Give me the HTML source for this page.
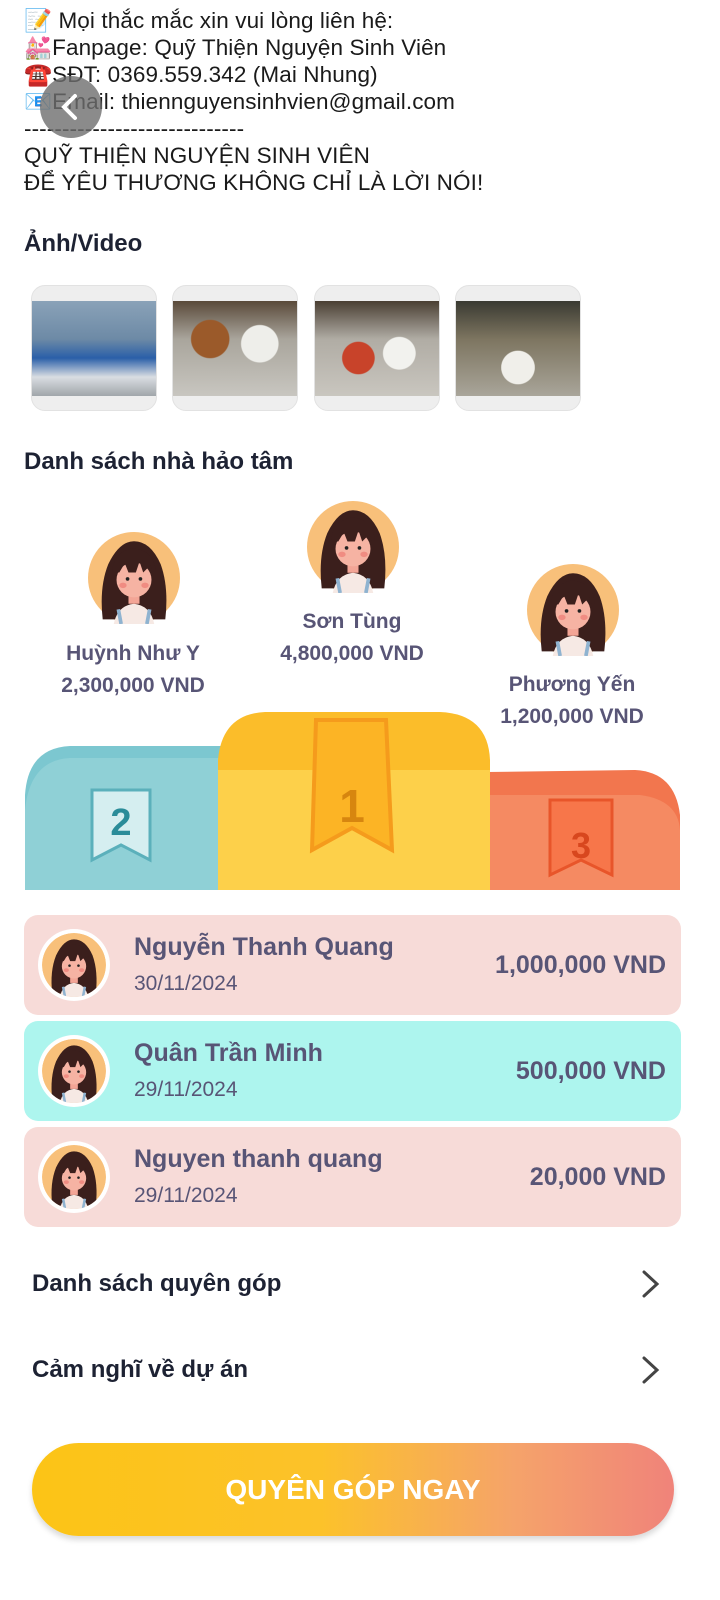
<!DOCTYPE html>
<html><head><meta charset="utf-8"><style>
*{margin:0;padding:0;box-sizing:border-box}
body{width:720px;height:1600px;background:#fff;font-family:"Liberation Sans","Noto Sans CJK SC",sans-serif;position:relative;overflow:hidden;color:#111}
.ab{position:absolute}
.txt{left:24px;top:7px;font-size:22.5px;line-height:27px;color:#1a1a1a;letter-spacing:0.1px}
h2{position:absolute;left:24px;font-size:24px;font-weight:bold;color:#1d2233}
.th{position:absolute;top:285px;width:126px;height:126px;border-radius:14px;background:#eee;overflow:hidden;border:1px solid #e2e2e2}
.th div{position:absolute;left:0;right:0;top:15px;height:95px}
.nm{position:absolute;text-align:center;font-weight:bold;color:#585576;font-size:21px;line-height:32px;width:260px}
.row{position:absolute;left:24px;width:657px;height:100px;border-radius:14px}
.row .av{position:absolute;left:14px;top:14px;width:72px;height:72px;border-radius:50%;background:#fff;padding:4px}
.row .n{position:absolute;left:110px;top:18px;font-size:25px;font-weight:bold;color:#585576}
.row .d{position:absolute;left:110px;top:57px;font-size:21px;color:#585576}
.row .v{position:absolute;right:15px;top:36px;font-size:25px;font-weight:bold;color:#585576}
.lk{position:absolute;left:32px;font-size:24px;font-weight:bold;color:#1d2233}
</style></head><body>
<svg width="0" height="0" style="position:absolute"><defs>
<symbol id="av" viewBox="0 0 100 100">
<circle cx="50" cy="50" r="50" fill="#f8c07a"/>
<path d="M16 95 Q12 60 22 35 Q34 10 50 10 Q68 10 79 35 Q88 60 84 95Z" fill="#3b1f1c"/>
<path d="M28 100 Q32 80 50 78 Q68 80 72 100Z" fill="#f6e9e4"/>
<path d="M33 84 L36 100 M67 84 L64 100" stroke="#8fb3d0" stroke-width="4"/>
<rect x="44" y="62" width="12" height="16" fill="#f3a596"/>
<ellipse cx="50" cy="52" rx="19" ry="19" fill="#f6b3a3"/>
<path d="M26 44 Q28 20 50 18 Q72 20 74 44 L70 44 L68 36 L60 44 L56 32 L52 44 L44 44 L40 34 L34 44Z" fill="#3b1f1c"/>
<circle cx="43" cy="51" r="2" fill="#222"/><circle cx="57" cy="51" r="2" fill="#222"/>
<ellipse cx="38" cy="58" rx="4" ry="3" fill="#f08c82"/><ellipse cx="62" cy="58" rx="4" ry="3" fill="#f08c82"/>
</symbol></defs></svg>

<div class="ab txt">📝 Mọi thắc mắc xin vui lòng liên hệ:<br>💒Fanpage: Quỹ Thiện Nguyện Sinh Viên<br>☎️SĐT: 0369.559.342 (Mai Nhung)<br>📧Email: thiennguyensinhvien@gmail.com<br>-----------------------------<br>QUỸ THIỆN NGUYỆN SINH VIÊN<br>ĐỂ YÊU THƯƠNG KHÔNG CHỈ LÀ LỜI NÓI!</div>
<div class="ab" style="left:40px;top:76px;width:62px;height:62px;border-radius:50%;background:rgba(110,110,110,.8)"><svg width="62" height="62"><path d="M35 20 L24 31 L35 42" stroke="#fff" stroke-width="4" fill="none" stroke-linecap="round"/></svg></div>

<h2 style="top:230px">Ảnh/Video</h2>
<div class="th" style="left:31px"><div style="background:linear-gradient(180deg,#8aa2b8 0%,#6d8aa6 40%,#2a5fa8 60%,#d9dde2 80%,#a0a6aa)"></div></div>
<div class="th" style="left:172px"><div style="background:radial-gradient(circle at 30% 40%,#9b5a2a 0 18%,transparent 19%),radial-gradient(circle at 70% 45%,#eeeeea 0 18%,transparent 19%),linear-gradient(#5a4a3a,#a9a59c 40%,#c8c6c0)"></div></div>
<div class="th" style="left:314px"><div style="background:radial-gradient(circle at 35% 60%,#c8432a 0 16%,transparent 17%),radial-gradient(circle at 68% 55%,#f2f2ee 0 16%,transparent 17%),linear-gradient(#4a3f33,#b0aca4 40%,#c9c6bf)"></div></div>
<div class="th" style="left:455px"><div style="background:radial-gradient(circle at 50% 70%,#f0efea 0 18%,transparent 19%),linear-gradient(#3a3a32,#7d7560 40%,#a9a59a)"></div></div>

<h2 style="top:448px">Danh sách nhà hảo tâm</h2>

<svg class="ab" style="left:88px;top:532px" width="92" height="92"><use href="#av"/></svg>
<svg class="ab" style="left:307px;top:501px" width="92" height="92"><use href="#av"/></svg>
<svg class="ab" style="left:527px;top:564px" width="92" height="92"><use href="#av"/></svg>
<div class="nm" style="left:3px;top:638px">Huỳnh Như Y<br>2,300,000 VND</div>
<div class="nm" style="left:222px;top:606px">Sơn Tùng<br>4,800,000 VND</div>
<div class="nm" style="left:442px;top:669px">Phương Yến<br>1,200,000 VND</div>

<svg class="ab" style="left:0;top:700px" width="720" height="190">
<path d="M25 190 L25 95 Q28 48 70 46 L225 46 L225 190Z" fill="#7cc7d0"/>
<path d="M25 110 Q30 60 70 58 L225 58 L225 190 L25 190Z" fill="#8fd0d6"/>
<path d="M92 90 L150 90 L150 160 L121 145 L92 160Z" fill="#d5eef0" stroke="#5bb0bb" stroke-width="3"/>
<text x="121" y="135" text-anchor="middle" font-family="Liberation Sans" font-weight="bold" font-size="38" fill="#2a8c99">2</text>
<path d="M487 190 L487 72 L635 70 Q675 72 680 115 L680 190Z" fill="#f2764e"/>
<path d="M487 190 L487 95 L640 95 Q678 100 680 130 L680 190Z" fill="#f58a62"/>
<path d="M550 100 L612 100 L612 175 L581 160 L550 175Z" fill="#f7764a" stroke="#e8552a" stroke-width="3"/>
<text x="581" y="158" text-anchor="middle" font-family="Liberation Sans" font-weight="bold" font-size="36" fill="#d8471e">3</text>
<path d="M218 190 L218 60 Q222 14 265 12 L440 12 Q488 14 490 60 L490 190Z" fill="#fbbd2a"/>
<path d="M218 190 L218 70 L490 70 L490 190Z" fill="#fdd04a"/>
<path d="M316 20 L386 20 L392 150 L352 128 L312 150Z" fill="#fcb425" stroke="#f59b1c" stroke-width="4"/>
<text x="352" y="122" text-anchor="middle" font-family="Liberation Sans" font-weight="bold" font-size="46" fill="#d7860f">1</text>
</svg>

<div class="row" style="top:915px;background:#f7dbd8"><svg class="av" viewBox="0 0 72 72"><use href="#av"/></svg><div class="n">Nguyễn Thanh Quang</div><div class="d">30/11/2024</div><div class="v">1,000,000 VND</div></div>
<div class="row" style="top:1021px;background:#adf5ee"><svg class="av" viewBox="0 0 72 72"><use href="#av"/></svg><div class="n">Quân Trần Minh</div><div class="d">29/11/2024</div><div class="v">500,000 VND</div></div>
<div class="row" style="top:1127px;background:#f7dbd8"><svg class="av" viewBox="0 0 72 72"><use href="#av"/></svg><div class="n">Nguyen thanh quang</div><div class="d">29/11/2024</div><div class="v">20,000 VND</div></div>

<div class="lk" style="top:1270px">Danh sách quyên góp</div>
<div class="lk" style="top:1356px">Cảm nghĩ về dự án</div>
<svg class="ab" style="left:636px;top:1268px" width="30" height="32"><path d="M8 4 L21 16 L8 28" stroke="#444" stroke-width="3" fill="none" stroke-linecap="round"/></svg>
<svg class="ab" style="left:636px;top:1354px" width="30" height="32"><path d="M8 4 L21 16 L8 28" stroke="#444" stroke-width="3" fill="none" stroke-linecap="round"/></svg>

<div class="ab" style="left:32px;top:1443px;width:642px;height:93px;border-radius:47px;background:linear-gradient(90deg,#fcc416,#fcc22a 45%,#f5a36a 75%,#f0837a);box-shadow:0 4px 6px rgba(0,0,0,.15);color:#fff;font-weight:bold;font-size:28px;text-align:center;line-height:93px">QUYÊN GÓP NGAY</div>
</body></html>
